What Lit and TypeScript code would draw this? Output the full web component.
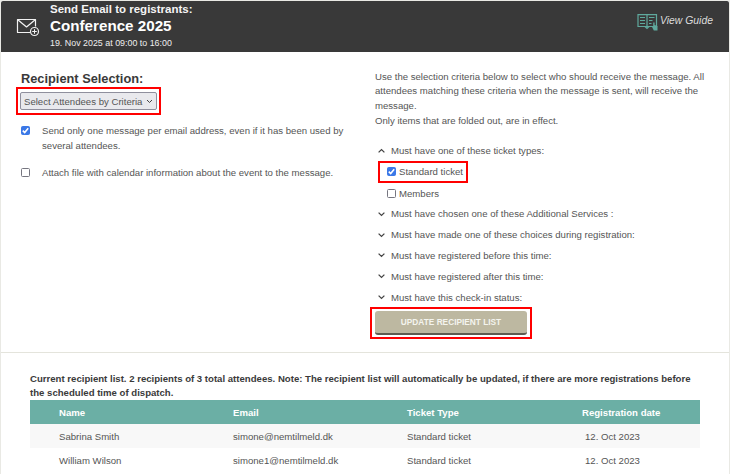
import { LitElement, html, css } from "lit";
import { customElement } from "lit/decorators.js";

const chev = (up = false) => html`<svg class="chev" width="7" height="6" viewBox="0 0 7 6"><path d=${up ? "M0.6 4.4 L3.5 1.6 L6.4 4.4" : "M0.6 1.6 L3.5 4.4 L6.4 1.6"} fill="none" stroke="#444" stroke-width="1.3"/></svg>`;

@customElement("app-root")
export class AppRoot extends LitElement {
  static styles = css`
    :host { display: block; width: 730px; height: 474px; overflow: hidden; font-family: "Liberation Sans", Arial, sans-serif; color: #555; background: #e9e9e4; box-sizing: border-box; padding: 1px 1px 0 1px; }
    * { box-sizing: border-box; }
    .panel { background: #fff; height: 473px; overflow: hidden; }
    .header { height: 51px; background: #393939; display: flex; color: #fff; position: relative; border-radius: 2px 2px 0 0; }
    .mail { margin: 17px 0 0 15px; flex: none; }
    .titles { margin-left: 10px; display: flex; flex-direction: column; }
    .t1 { font-size: 11.5px; font-weight: 700; line-height: 14px; margin-top: 1px; color: #f4f4f4; }
    .t2 { font-size: 15.2px; font-weight: 700; line-height: 20px; margin-top: 0; }
    .t3 { font-size: 8.9px; line-height: 12px; margin-top: 1px; color: #eee; }
    .guide { position: absolute; left: 636px; top: 12px; display: flex; align-items: flex-start; gap: 2px; font-size: 10.4px; font-style: italic; color: #ddd; }
    .guide span { margin-top: 2px; }
    .main { display: flex; height: 301px; border-bottom: 1px solid #e4e4dc; }
    .left { width: 373px; padding: 19px 0 0 20px; }
    .right { padding: 17.5px 0 0 0; flex: 1; }
    h2 { margin: 0; font-size: 12.8px; line-height: 16px; font-weight: 700; color: #3a3a3a; }
    .redbox { border: 2px solid #f00; display: inline-flex; }
    .selbox { padding: 3px 2px; margin: 0 0 0 -5px; }
    .select { width: 137px; height: 18px; background: #e9e9ed; border: 1px solid #8f8f9d; border-radius: 2px; font-size: 9.6px; color: #555; display: flex; align-items: center; justify-content: space-between; padding: 0 3px; white-space: nowrap; }
    .opt { display: flex; font-size: 9.6px; line-height: 15px; }
    .opt.a { margin-top: 8px; }
    .opt.b { margin-top: 12px; }
    .opt .txt { margin-left: 12px; width: 310px; }
    .box { width: 9px; height: 9px; border-radius: 1.5px; border: 1px solid #767680; background: #fff; flex: none; margin-top: 3px; display: block; }
    .box.on { background: #3b78e7; border-color: #3b78e7; position: relative; }
    .box.on svg { display: block; }
    .intro { font-size: 9.6px; line-height: 14.7px; width: 340px; margin-left: 1px; }
    .crit { margin-top: 11.8px; }
    .row { display: flex; align-items: center; height: 20.8px; font-size: 9.6px; }
    .row .chev { margin: 0 6px 0 4px; flex: none; }
    .ticket { display: flex; align-items: center; gap: 3px; font-size: 9.6px; }
    .ticket .box { margin: 0; }
    .tk1 { display: inline-flex; margin: 0 0 0 4px; height: 22px; width: 90px; padding: 0 0 0 7px; vertical-align: top; }
    .tk2 { height: 20.6px; margin-left: 13px; }
    .update { margin: 0 0 0 -4px; padding: 2px 3px; vertical-align: top; }
    .btn { width: 152px; height: 24px; background: #bdb8a1; border-bottom: 2px solid #5d5b50; border-radius: 3px; color: #f4f4ee; font-size: 8.3px; font-weight: 700; display: flex; align-items: center; justify-content: center; }
    .bottom { padding: 19px 29px 0 29px; }
    .note { font-size: 9.6px; font-weight: 700; line-height: 14px; height: 28px; color: #3a3a3a; width: 670px; }
    .table { display: grid; grid-template-columns: 203px 174px 175px 118px; width: 670px; font-size: 9.6px; }
    .table > div { height: 24px; display: flex; align-items: center; }
    .th { background: #6bafa5; color: #fff; font-weight: 700; }
    .c1 { padding-left: 29px; }
    .c5 { padding-left: 3px; }
    .alt { background: #f8f8f8; }
  `;

  render() {
    const crit = ["Must have chosen one of these Additional Services :", "Must have made one of these choices during registration:", "Must have registered before this time:", "Must have registered after this time:", "Must have this check-in status:"];
    const rows = [["Sabrina Smith", "simone@nemtilmeld.dk", "Standard ticket", "12. Oct 2023"], ["William Wilson", "simone1@nemtilmeld.dk", "Standard ticket", "12. Oct 2023"]];
    const check = html`<svg width="9" height="9" viewBox="0 0 9 9" style="margin:-1px"><path d="M1.8 4.6 L3.7 6.5 L7.2 2.3" fill="none" stroke="#fff" stroke-width="1.6"/></svg>`;
    return html`<div class="panel">
      <div class="header">
        <svg class="mail" width="24" height="19" viewBox="0 0 24 19" fill="none" stroke="#f2f2f2" stroke-width="1.2" stroke-linejoin="round"><path d="M14 14.5 H1.5 V1.5 H19.5 V8.5"/><path d="M1.5 1.5 L10.5 9 L19.5 1.5"/><circle cx="18.5" cy="13.5" r="4"/><path d="M18.5 11.2 V15.8 M16.2 13.5 H20.8" stroke-width="1"/></svg>
        <div class="titles"><div class="t1">Send Email to registrants:</div><div class="t2">Conference 2025</div><div class="t3">19. Nov 2025 at 09:00 to 16:00</div></div>
        <div class="guide"><svg width="21" height="18" viewBox="0 0 21 18" fill="none" stroke="#5fa99d" stroke-width="1.2"><path d="M1 1.6 H10 V13.5 H1 Z M10 1.6 H19.5 V13.5 H10 Z"/><path d="M8 13.5 L10 15.5 L12 13.5"/><path d="M3 4.5 H8 M3 7.5 H8 M3 10.5 H8 M12 4.5 H17.5 M12 7.5 H15.5 M12 10.5 H14.5"/><path d="M16.2 9.5 H17.6 V12 L20.5 13 V17.5 H16.8 L14.8 13.5 L16.2 14 Z" fill="#5fa99d" stroke="none"/></svg><span>View Guide</span></div>
      </div>
      <div class="main">
        <div class="left">
          <h2>Recipient Selection:</h2>
          <div class="redbox selbox"><div class="select"><span>Select Attendees by Criteria</span><svg width="7" height="5" viewBox="0 0 7 5"><path d="M1 1 L3.5 3.5 L6 1" fill="none" stroke="#444" stroke-width="1"/></svg></div></div>
          <div class="opt a"><span class="box on">${check}</span><div class="txt">Send only one message per email address, even if it has been used by several attendees.</div></div>
          <div class="opt b"><span class="box"></span><div class="txt">Attach file with calendar information about the event to the message.</div></div>
        </div>
        <div class="right">
          <div class="intro">Use the selection criteria below to select who should receive the message. All attendees matching these criteria when the message is sent, will receive the message.<br>Only items that are folded out, are in effect.</div>
          <div class="crit">
            <div class="row">${chev(true)}Must have one of these ticket types:</div>
            <div class="redbox tk1 ticket"><span class="box on">${check}</span>Standard ticket</div>
            <div class="ticket tk2"><span class="box"></span>Members</div>
            ${crit.map((c) => html`<div class="row">${chev()}${c}</div>`)}
            <div class="redbox update"><div class="btn">UPDATE RECIPIENT LIST</div></div>
          </div>
        </div>
      </div>
      <div class="bottom">
        <div class="note">Current recipient list. 2 recipients of 3 total attendees. Note: The recipient list will automatically be updated, if there are more registrations before the scheduled time of dispatch.</div>
        <div class="table">
          <div class="th c1">Name</div><div class="th">Email</div><div class="th">Ticket Type</div><div class="th">Registration date</div>
          ${rows.map((r, i) => html`<div class="c1 ${i ? "" : "alt"}">${r[0]}</div><div class="${i ? "" : "alt"}">${r[1]}</div><div class="${i ? "" : "alt"}">${r[2]}</div><div class="c5 ${i ? "" : "alt"}">${r[3]}</div>`)}
        </div>
      </div>
    </div>`;
  }
}
